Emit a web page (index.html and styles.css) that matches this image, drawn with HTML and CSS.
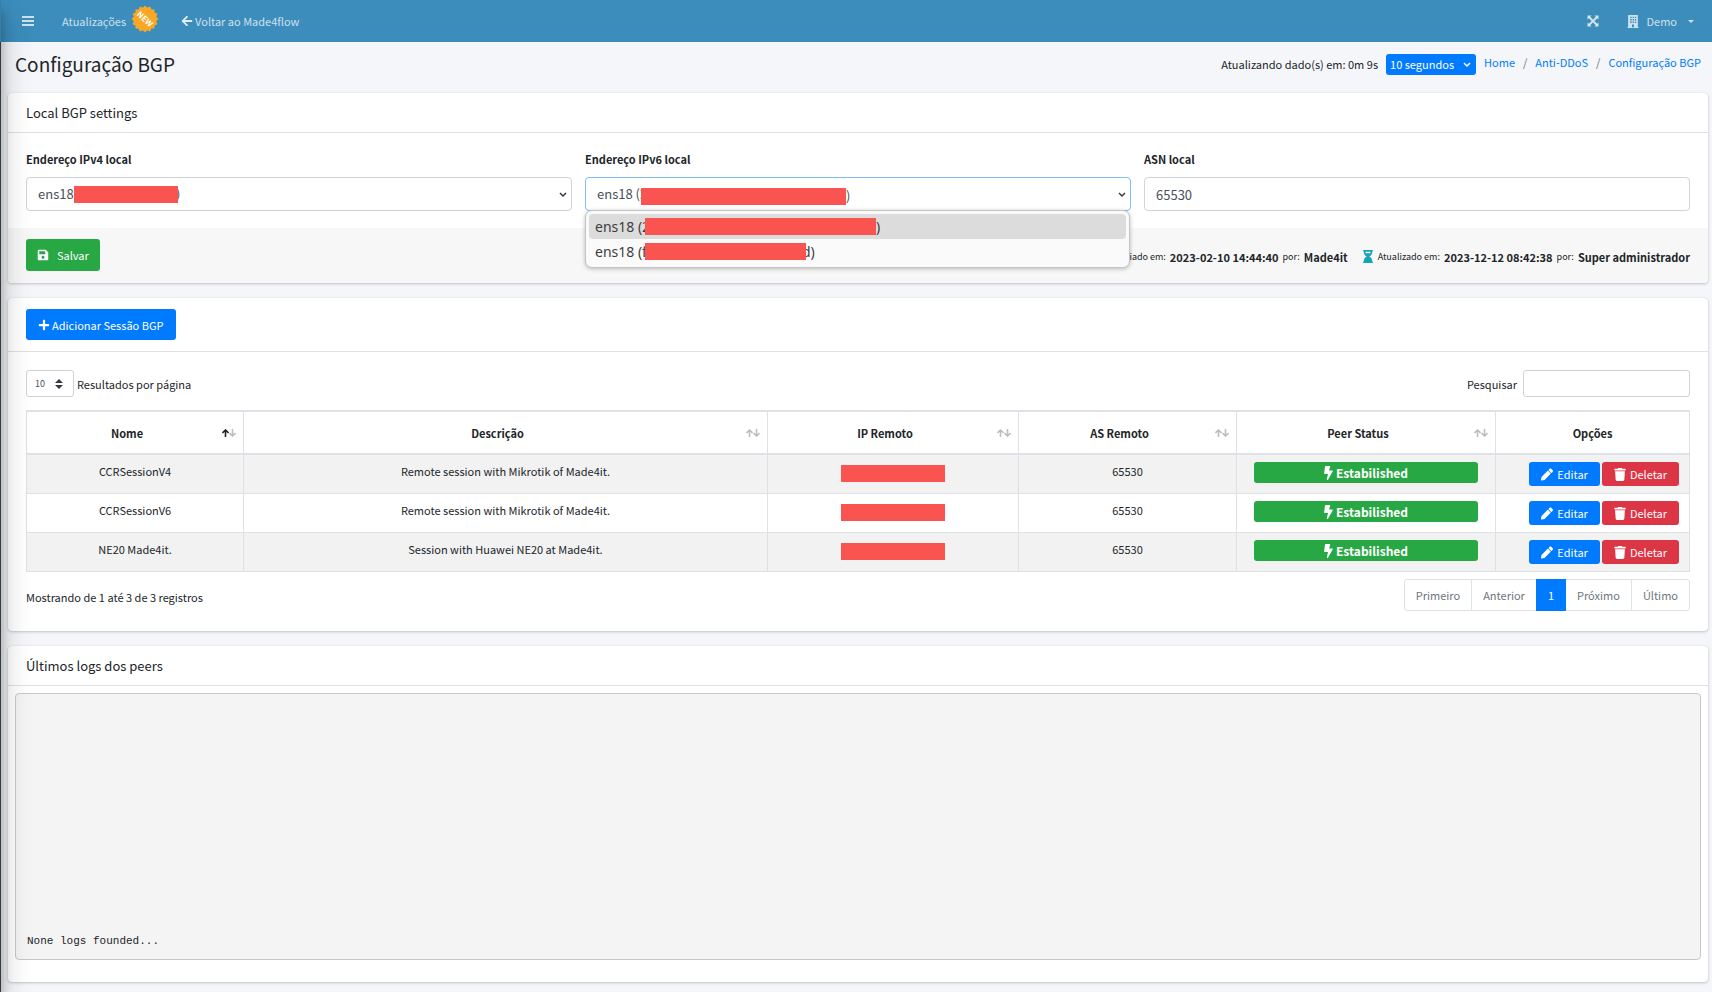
FILE: index.html
```html
<!DOCTYPE html>
<html lang="pt-BR">
<head>
<meta charset="utf-8">
<title>Configuração BGP</title>
<link rel="stylesheet" href="styles.css">
</head>
<body>
<svg class="sprite" aria-hidden="true">
  <symbol id="save" viewBox="0 0 448 512"><path d="M433.941 129.941l-83.882-83.882A48 48 0 0 0 316.118 32H48C21.49 32 0 53.49 0 80v352c0 26.51 21.49 48 48 48h352c26.51 0 48-21.49 48-48V163.882a48 48 0 0 0-14.059-33.941zM224 416c-35.346 0-64-28.654-64-64 0-35.346 28.654-64 64-64s64 28.654 64 64c0 35.346-28.654 64-64 64zm96-304.52V212c0 6.627-5.373 12-12 12H76c-6.627 0-12-5.373-12-12V108c0-6.627 5.373-12 12-12h228.52c3.183 0 6.235 1.264 8.485 3.515l3.48 3.48A11.996 11.996 0 0 1 320 111.48z"/></symbol>
  <symbol id="back" viewBox="0 0 448 512"><path d="M257.5 445.1l-22.2 22.2c-9.4 9.4-24.6 9.4-33.9 0L7 273c-9.4-9.4-9.4-24.6 0-33.9L201.4 44.7c9.4-9.4 24.6-9.4 33.9 0l22.2 22.2c9.5 9.5 9.3 25-.4 34.3L136.6 216H424c13.3 0 24 10.7 24 24v32c0 13.3-10.7 24-24 24H136.6l120.5 114.8c9.8 9.3 10 24.8.4 34.3z"/></symbol>
  <symbol id="plus" viewBox="0 0 448 512"><path d="M416 208H272V64c0-17.67-14.33-32-32-32h-32c-17.67 0-32 14.33-32 32v144H32c-17.67 0-32 14.33-32 32v32c0 17.67 14.33 32 32 32h144v144c0 17.67 14.33 32 32 32h32c17.67 0 32-14.33 32-32V304h144c17.67 0 32-14.33 32-32v-32c0-17.67-14.33-32-32-32z"/></symbol>
  <symbol id="bolt" viewBox="0 0 320 512"><path d="M296 160H180.6l42.6-129.8C227.2 15 215.7 0 200 0H56C44 0 33.8 8.9 32.2 20.8l-32 240C-1.7 275.2 9.5 288 24 288h118.7L96.6 482.5c-3.6 15.2 8 29.5 23.3 29.5 8.4 0 16.4-4.4 20.8-12l176-304c9.3-15.9-2.2-36-20.7-36z"/></symbol>
  <symbol id="trash" viewBox="0 0 448 512"><path d="M432 32H312l-9.4-18.7A24 24 0 0 0 281.1 0H166.8a23.72 23.72 0 0 0-21.4 13.3L136 32H16A16 16 0 0 0 0 48v32a16 16 0 0 0 16 16h416a16 16 0 0 0 16-16V48a16 16 0 0 0-16-16zM53.2 467a48 48 0 0 0 47.9 45h245.8a48 48 0 0 0 47.9-45L416 128H32z"/></symbol>
  <symbol id="pencil" viewBox="0 0 512 512"><path d="M497.9 142.1l-46.1 46.1c-4.7 4.7-12.3 4.7-17 0l-111-111c-4.7-4.7-4.7-12.3 0-17l46.1-46.1c18.7-18.7 49.1-18.7 67.9 0l60.1 60.1c18.8 18.7 18.8 49.1 0 67.9zM284.2 99.8L21.6 362.4.4 483.9c-2.9 16.4 11.4 30.6 27.8 27.8l121.5-21.3 262.6-262.6c4.7-4.7 4.7-12.3 0-17l-111-111c-4.8-4.7-12.4-4.7-17.1 0z"/></symbol>
  <symbol id="bars" viewBox="0 0 12 12"><path d="M0 1h12v2H0zM0 5h12v2H0zM0 9h12v2H0z"/></symbol>
  <symbol id="expand" viewBox="0 0 12 12"><path d="M0.5 0.5h4L0.5 4.500zM11.500 .5v4L7.500 .5zM.5 11.500v-4l4 4zM11.500 11.500h-4l4-4z"/><path d="M2 2l8 8M10 2l-8 8" stroke="currentColor" stroke-width="2"/></symbol>
  <symbol id="building" viewBox="0 0 448 512"><path fill-rule="evenodd" d="M436 480h-20V24c0-13-11-24-24-24H56C43 0 32 11 32 24v456H12c-7 0-12 5-12 12v20h448v-20c0-7-5-12-12-12zM112 64h64v56h-64zm96 0h56v56h-56zm88 0h56v56h-56zM112 160h64v56h-64zm96 0h56v56h-56zm88 0h56v56h-56zM112 256h64v56h-64zm96 0h56v56h-56zm88 0h56v56h-56zM184 376h80v104h-80z"/></symbol>
  <symbol id="hourglass" viewBox="0 0 384 512"><path d="M360 64c13 0 24-11 24-24V24c0-13-11-24-24-24H24C11 0 0 11 0 24v16c0 13 11 24 24 24 0 91 51 167 120 192C75 281 24 357 24 448c-13 0-24 11-24 24v16c0 13 11 24 24 24h336c13 0 24-11 24-24v-16c0-13-11-24-24-24 0-91-51-167-120-192 69-25 120-101 120-192zM102 128c-9-20-14-41-14-64h208c0 23-5 45-14 64z"/></symbol>
  <symbol id="up" viewBox="0 0 7 8"><path d="M3.500 8V1M.5 4L3.500 1 6.500 4" fill="none" stroke="currentColor" stroke-width="1.600"/></symbol>
  <symbol id="down" viewBox="0 0 7 8"><path d="M3.500 0v7M.5 4L3.500 7 6.500 4" fill="none" stroke="currentColor" stroke-width="1.600"/></symbol>
</svg>

<aside class="sidebar"></aside>
<div class="page">
  <header class="navbar">
    <button class="nav-item toggle" aria-label="Menu"><svg class="icon"><use href="#bars"/></svg></button>
    <a class="nav-item updates" href="#">Atualizações
      <svg class="burst" viewBox="0 0 28 28">
        <g fill="#f9a826"><rect x="4.500" y="4.500" width="19" height="19"/><rect x="4.500" y="4.500" width="19" height="19" transform="rotate(22.500 14 14)"/><rect x="4.500" y="4.500" width="19" height="19" transform="rotate(45 14 14)"/><rect x="4.500" y="4.500" width="19" height="19" transform="rotate(67.500 14 14)"/></g>
        <text x="14" y="17" text-anchor="middle" transform="rotate(42 14 14)" class="burst-text">NEW</text>
      </svg>
    </a>
    <a class="nav-item back" href="#"><svg class="icon"><use href="#back"/></svg>Voltar ao Made4flow</a>
    <div class="nav-right">
      <button class="nav-item" aria-label="Tela cheia"><svg class="icon"><use href="#expand"/></svg></button>
      <button class="nav-item user"><svg class="icon"><use href="#building"/></svg>Demo<span class="caret"></span></button>
    </div>
  </header>

  <div class="content-header">
    <h1>Configuração BGP</h1>
    <div class="header-tools">
      <label for="refresh">Atualizando dado(s) em: 0m 9s</label>
      <span class="select-wrap">
        <select id="refresh" class="refresh"><option>10 segundos</option></select>
        <svg class="chevron light" viewBox="0 0 8 6"><path d="M1 1l3 3 3-3"/></svg>
      </span>
      <nav class="breadcrumb"><a href="#">Home</a><span>/</span><a href="#">Anti-DDoS</a><span>/</span><a href="#">Configuração BGP</a></nav>
    </div>
  </div>

  <main>
    <section class="card">
      <h2 class="card-header">Local BGP settings</h2>
      <div class="form-grid">
        <div class="field">
          <label for="ipv4">Endereço IPv4 local</label>
          <span class="select-wrap">
            <select id="ipv4" class="control"><option>ens18</option></select>
            <span class="mask mask-v4"><i class="redact"></i><span class="close">)</span></span>
            <svg class="chevron" viewBox="0 0 8 6"><path d="M1 1l3 3 3-3"/></svg>
          </span>
        </div>
        <div class="field">
          <label for="ipv6">Endereço IPv6 local</label>
          <span class="select-wrap">
            <select id="ipv6" class="control active"><option>ens18 (2</option></select>
            <span class="mask mask-v6"><i class="redact wide"></i>)</span>
            <svg class="chevron" viewBox="0 0 8 6"><path d="M1 1l3 3 3-3"/></svg>
            <ul class="popup" role="listbox" aria-label="Endereço IPv6 local">
              <li role="option" aria-selected="true" class="selected"><span class="start">ens18 (2</span><i class="redact wider"></i>)</li>
              <li role="option" aria-selected="false"><span class="start">ens18 (f</span><i class="redact medium"></i><span class="tucked">d)</span></li>
            </ul>
          </span>
        </div>
        <div class="field">
          <label for="asn">ASN local</label>
          <input id="asn" class="control" type="text" value="65530">
        </div>
      </div>
      <div class="card-footer">
        <button class="btn green save"><svg class="icon"><use href="#save"/></svg>Salvar</button>
        <div class="meta">
          <p><svg class="icon hourglass"><use href="#hourglass"/></svg><small>Criado em:</small> <b>2023-02-10 14:44:40</b> <small>por:</small> <b>Made4it</b></p>
          <p><svg class="icon hourglass"><use href="#hourglass"/></svg><small>Atualizado em:</small> <b>2023-12-12 08:42:38</b> <small>por:</small> <b>Super administrador</b></p>
        </div>
      </div>
    </section>

    <section class="card">
      <div class="card-toolbar"><button class="btn blue add"><svg class="icon"><use href="#plus"/></svg>Adicionar Sessão BGP</button></div>
      <div class="table-area">
        <div class="table-tools">
          <div class="length">
            <span class="select-wrap">
              <select id="length" class="small-control"><option>10</option></select>
              <svg class="updown" viewBox="0 0 8 10"><path d="M0 4l4-4 4 4zM0 6h8l-4 4z"/></svg>
            </span>
            <label for="length">Resultados por página</label>
          </div>
          <div class="search"><label for="search">Pesquisar</label><input id="search" class="small-control" type="search"></div>
        </div>
        <table>
          <colgroup><col class="c-name"><col class="c-desc"><col class="c-ip"><col class="c-as"><col class="c-status"><col class="c-opt"></colgroup>
          <thead><tr>
            <th><div class="th"><span>Nome</span><svg class="sort on"><use href="#up"/></svg><svg class="sort"><use href="#down"/></svg></div></th>
            <th><div class="th"><span>Descrição</span><svg class="sort"><use href="#up"/></svg><svg class="sort"><use href="#down"/></svg></div></th>
            <th><div class="th"><span>IP Remoto</span><svg class="sort"><use href="#up"/></svg><svg class="sort"><use href="#down"/></svg></div></th>
            <th><div class="th"><span>AS Remoto</span><svg class="sort"><use href="#up"/></svg><svg class="sort"><use href="#down"/></svg></div></th>
            <th><div class="th"><span>Peer Status</span><svg class="sort"><use href="#up"/></svg><svg class="sort"><use href="#down"/></svg></div></th>
            <th>Opções</th>
          </tr></thead>
          <tbody>
            <tr><td>CCRSessionV4</td><td>Remote session with Mikrotik of Made4it.</td><td><i class="redact"></i></td><td>65530</td>
              <td class="status"><span class="badge"><svg class="icon"><use href="#bolt"/></svg>Estabilished</span></td>
              <td><div class="actions"><button class="btn blue sm"><svg class="icon"><use href="#pencil"/></svg>Editar</button><button class="btn red sm"><svg class="icon"><use href="#trash"/></svg>Deletar</button></div></td></tr>
            <tr><td>CCRSessionV6</td><td>Remote session with Mikrotik of Made4it.</td><td><i class="redact"></i></td><td>65530</td>
              <td class="status"><span class="badge"><svg class="icon"><use href="#bolt"/></svg>Estabilished</span></td>
              <td><div class="actions"><button class="btn blue sm"><svg class="icon"><use href="#pencil"/></svg>Editar</button><button class="btn red sm"><svg class="icon"><use href="#trash"/></svg>Deletar</button></div></td></tr>
            <tr><td>NE20 Made4it.</td><td>Session with Huawei NE20 at Made4it.</td><td><i class="redact"></i></td><td>65530</td>
              <td class="status"><span class="badge"><svg class="icon"><use href="#bolt"/></svg>Estabilished</span></td>
              <td><div class="actions"><button class="btn blue sm"><svg class="icon"><use href="#pencil"/></svg>Editar</button><button class="btn red sm"><svg class="icon"><use href="#trash"/></svg>Deletar</button></div></td></tr>
          </tbody>
        </table>
        <div class="table-bottom">
          <p>Mostrando de 1 até 3 de 3 registros</p>
          <nav class="pagination"><a href="#">Primeiro</a><a href="#">Anterior</a><a href="#" class="current">1</a><a href="#">Próximo</a><a href="#">Último</a></nav>
        </div>
      </div>
    </section>

    <section class="card">
      <h2 class="card-header">Últimos logs dos peers</h2>
      <div class="log-area"><pre>None logs founded...</pre></div>
    </section>
  </main>
</div>
</body>
</html>
```
FILE: styles.css
```css
* { box-sizing: border-box; }
body {
  margin: 0;
  min-height: 100vh;
  display: flex;
  overflow-x: hidden;
  background: #f4f6f9;
  color: #212529;
  font: 11px/18px "Noto Sans CJK SC", "Noto Sans", sans-serif;
}
h1, h2, p, ul, pre { margin: 0; padding: 0; font-weight: 400; }
button, input, select { font: inherit; color: inherit; margin: 0; }
button { border: 0; background: none; cursor: pointer; }
a { color: #007bff; text-decoration: none; }
.sprite { position: absolute; width: 0; height: 0; }
.icon { width: 12px; height: 12px; fill: currentColor; flex: none; }

/* Collapsed sidebar: only its last pixel and its shadow show. */
.sidebar {
  position: relative;
  z-index: 2;
  flex: none;
  width: 225px;
  margin-left: -224px;
  background: linear-gradient(#367fa9 42px, #343a40 42px);
  box-shadow: 0 14px 28px rgba(0, 0, 0, .25), 0 10px 10px rgba(0, 0, 0, .22);
  pointer-events: none;
}
.page { flex: 1; min-width: 0; }

.navbar {
  display: flex;
  align-items: center;
  height: 42px;
  padding: 0 18px 0 21px;
  background: #3c8dbc;
}
.nav-item {
  display: flex;
  align-items: center;
  padding: 0;
  color: rgba(255, 255, 255, .75);
}
.updates { margin-left: 28px; gap: 5px; }
.burst { width: 28px; height: 28px; margin-top: -5px; }
.burst-text { font: 700 8px "Noto Sans CJK SC", sans-serif; fill: #fff; }
.back { margin-left: 22px; gap: 2px; }
.back .icon { color: #fff; opacity: .85; }
.nav-right { margin-left: auto; display: flex; gap: 28px; }
.user { gap: 7px; }
.user .icon { height: 13px; }
.caret {
  margin-left: 4px;
  border: 3px solid transparent;
  border-top-color: currentColor;
  border-bottom: 0;
}

.content-header {
  display: flex;
  justify-content: space-between;
  align-items: flex-start;
  padding: 7px 11px 14px 14px;
}
h1 { font-size: 19px; line-height: 30px; }
.header-tools { display: flex; align-items: center; gap: 8px; padding-top: 4px; }
.select-wrap { position: relative; display: block; }
select { appearance: none; }
.refresh {
  display: block;
  width: 90px;
  height: 21px;
  padding: 0 4px;
  border: 0;
  border-radius: 3px;
  background: #007bff;
  color: #fff;
}
.chevron {
  position: absolute;
  right: 5px;
  top: 50%;
  width: 8px;
  height: 6px;
  margin-top: -2px;
  fill: none;
  stroke: #343a40;
  stroke-width: 1.5px;
  pointer-events: none;
}
.light { stroke: #fff; }
.breadcrumb { display: flex; gap: 8px; padding-bottom: 4px; }
.breadcrumb span { color: #6c757d; }

main { display: flex; flex-direction: column; gap: 15px; padding: 0 4px 11px 7px; }
.card {
  background: #fff;
  border-radius: 4px;
  box-shadow: 0 0 1px rgba(0, 0, 0, .13), 0 1px 3px rgba(0, 0, 0, .2);
}
.card-header {
  padding: 10px 18px 9px;
  font-size: 13px;
  line-height: 20px;
  border-bottom: 1px solid #dfdfdf;
}
.form-grid {
  display: grid;
  grid-template-columns: repeat(3, 1fr);
  gap: 13px;
  padding: 17px 18px;
}
.field label { display: block; margin-bottom: 9px; font-weight: 700; }
.control {
  display: block;
  width: 100%;
  height: 34px;
  padding: 0 11px;
  border: 1px solid #ced4da;
  border-radius: 4px;
  background: #fff;
  color: #495057;
  font-size: 13px;
}
.active { border-color: #80bdff; }
.redact {
  position: relative;
  z-index: 1;
  display: inline-block;
  flex: none;
  width: 104px;
  height: 17px;
  background: #fa5450;
}
.wide { width: 205px; }
.wider { width: 231px; }
.medium { width: 161px; }
.tucked { margin-left: -4px; }
.close { margin-left: -2px; }
.mask {
  position: absolute;
  top: 8px;
  display: flex;
  align-items: center;
  color: #495057;
  font-size: 13px;
  pointer-events: none;
}
.mask-v4 { left: 48px; }
.mask-v6 { left: 56px; top: 10px; }
.popup {
  position: absolute;
  z-index: 3;
  top: 33px;
  left: 0;
  right: 1px;
  padding: 3px;
  list-style: none;
  background: #fafafa;
  border: 1px solid #c4c4c4;
  border-radius: 7px;
  box-shadow: 0 1px 4px rgba(0, 0, 0, .25);
  color: #3d3d3d;
  font: 14px/25px "Noto Sans", sans-serif;
}
.popup li { display: flex; align-items: center; padding: 0 6px; border-radius: 4px; }
.popup .selected { background: #dcdcdc; }
.start { width: 50px; white-space: nowrap; }
.card-footer {
  display: flex;
  justify-content: space-between;
  align-items: flex-start;
  padding: 11px 18px 12px;
  background: #f7f7f7;
  border-radius: 0 0 4px 4px;
}
.btn {
  display: flex;
  align-items: center;
  height: 32px;
  padding: 0 12px;
  border-radius: 3px;
  color: #fff;
}
.green { background: #28a745; }
.blue { background: #007bff; }
.red { background: #dc3545; }
.save { gap: 8px; padding: 0 11px; }
.add { gap: 2px; height: 31px; }
.meta { display: flex; gap: 14px; padding-top: 9px; }
.meta p { display: flex; align-items: center; gap: 4px; }
.meta small { font-size: 9px; }
.meta .hourglass { height: 13px; margin-top: -2px; fill: #17a2b8; }

.card-toolbar { padding: 11px 18px; border-bottom: 1px solid #dfdfdf; }
.table-area { padding: 18px 18px 20px; }
.table-tools { display: flex; justify-content: space-between; margin-bottom: 13px; }
.length, .search { display: flex; align-items: center; gap: 3px; }
.search { gap: 6px; }
.small-control {
  display: block;
  width: 48px;
  height: 27px;
  padding: 0 8px;
  border: 1px solid #ced4da;
  border-radius: 3px;
  background: #fff;
  color: #495057;
  font-size: 9px;
}
.search .small-control { width: 167px; }
.updown { position: absolute; right: 11px; top: 9px; width: 8px; height: 10px; fill: #343a40; }
table { width: 100%; table-layout: fixed; border-collapse: collapse; text-align: center; }
.c-name { width: 217px; }
.c-desc { width: 524px; }
.c-ip { width: 251px; }
.c-as { width: 218px; }
.c-status { width: 259px; }
.c-opt { width: 194px; }
th, td { border: 1px solid #dee2e6; padding: 7px 10px; vertical-align: top; }
th { border-top-width: 2px; border-bottom-width: 2px; padding: 12px 7px 11px; font-weight: 700; }
.th { display: flex; align-items: center; padding-left: 3px; }
.th span { flex: 1; padding-right: 5px; }
.sort { width: 7px; height: 8px; color: #bcbec0; }
.sort.on { color: #212529; }
tbody tr:nth-child(odd) { background: #f2f2f2; }
td .redact { display: block; margin: 3px auto 0; }
.status { padding: 7px 17px; }
.badge {
  display: flex;
  align-items: center;
  justify-content: center;
  gap: 3px;
  height: 21px;
  border-radius: 3px;
  background: #28a745;
  color: #fff;
  font-size: 12px;
  font-weight: 700;
}
.badge .icon { width: 9px; height: 14px; }
.actions { display: flex; justify-content: flex-end; gap: 2px; }
.sm { height: 24px; gap: 4px; }
.sm .icon { height: 13px; }
.table-bottom { display: flex; justify-content: space-between; padding-top: 7px; }
.table-bottom p { padding-top: 9px; }
.pagination { display: flex; border: 1px solid #dee2e6; border-radius: 3px; }
.pagination a { padding: 6px 11px; color: #6c757d; border-right: 1px solid #dee2e6; }
.pagination a:last-child { border-right: 0; }
.pagination .current { margin: -1px 0 -1px -1px; padding: 7px 12px; background: #007bff; color: #fff; border: 0; }

.log-area { padding: 7px 7px 22px; }
pre {
  display: flex;
  align-items: flex-end;
  height: 267px;
  padding: 10px 11px;
  background: #f4f4f4;
  border: 1px solid #c8c8c8;
  border-radius: 4px;
  font: 11px/16px "Liberation Mono", monospace;
}
```
